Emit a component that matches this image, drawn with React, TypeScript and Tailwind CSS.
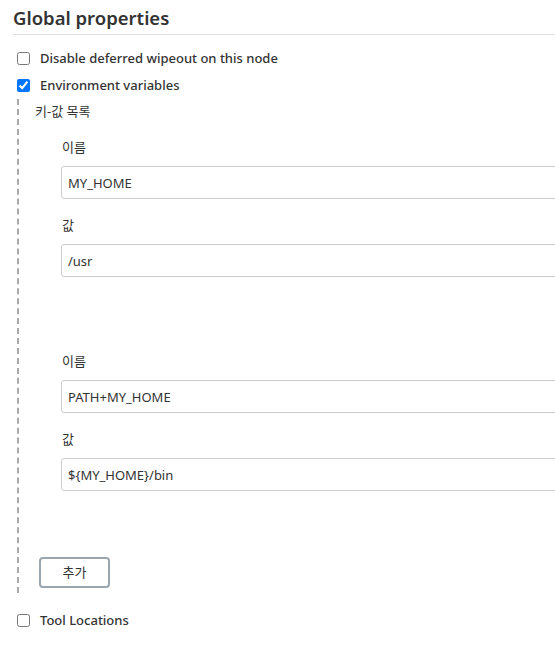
import React, { useState } from "react";

type Entry = { name: string; value: string };

const font = { fontFamily: '"Noto Sans", "Noto Sans CJK KR", sans-serif' };

function CheckRow({ label, checked }: { label: string; checked: boolean }) {
  const [on, setOn] = useState(checked);
  return (
    <label className="flex items-center h-[27px] pl-[17px] cursor-pointer">
      <input
        type="checkbox"
        checked={on}
        onChange={() => setOn(!on)}
        className="w-[13px] h-[13px] m-0 accent-[#0075ff]"
      />
      <span className="ml-[10px] text-[13px] font-medium text-[#333]">{label}</span>
    </label>
  );
}

export default function App() {
  const [entries, setEntries] = useState<Entry[]>([
    { name: "MY_HOME", value: "/usr" },
    { name: "PATH+MY_HOME", value: "${MY_HOME}/bin" },
  ]);

  return (
    <div className="w-[555px] h-[645px] overflow-hidden bg-white text-[#333]" style={font}>
      <div className="pl-[13px] pt-[4px]">
        <h2 className="text-[18.5px] font-semibold leading-[28px] pb-[2px] border-b border-[#dfe1e3]">
          Global properties
        </h2>
      </div>

      <div className="mt-[10px]">
        <CheckRow label="Disable deferred wipeout on this node" checked={false} />
        <CheckRow label="Environment variables" checked={true} />
      </div>

      <div className="ml-[17px] border-l-2 border-dashed border-[#a9a9a9] pl-[16px] pt-[2px] pb-[5px]">
        <div className="text-[13px] leading-[20px]">키-값 목록</div>

        {entries.map((e, i) => (
          <div key={i} className={i === 0 ? "mt-[16px] pl-[26px]" : "mt-[74px] pl-[26px]"}>
            <div className="text-[13px] leading-[20px] mb-[9px] pl-px">이름</div>
            <input
              className="w-[520px] h-[33px] border border-[#ccc] rounded-[3px] px-[6px] text-[13px] text-[#333] outline-none"
              value={e.name}
              onChange={(ev) =>
                setEntries(entries.map((x, j) => (j === i ? { ...x, name: ev.target.value } : x)))
              }
            />
            <div className="text-[13px] leading-[20px] mt-[16px] mb-[9px] pl-px">값</div>
            <input
              className="w-[520px] h-[33px] border border-[#ccc] rounded-[3px] px-[6px] text-[13px] text-[#333] outline-none"
              value={e.value}
              onChange={(ev) =>
                setEntries(entries.map((x, j) => (j === i ? { ...x, value: ev.target.value } : x)))
              }
            />
          </div>
        ))}

        <button
          onClick={() => setEntries([...entries, { name: "", value: "" }])}
          className="mt-[66px] ml-[4px] w-[71px] h-[31px] border-2 border-[#9aa5ad] rounded-[4px] text-[13px] text-[#333] bg-white"
        >
          추가
        </button>
      </div>

      <div className="mt-[14px]">
        <CheckRow label="Tool Locations" checked={false} />
      </div>
    </div>
  );
}
